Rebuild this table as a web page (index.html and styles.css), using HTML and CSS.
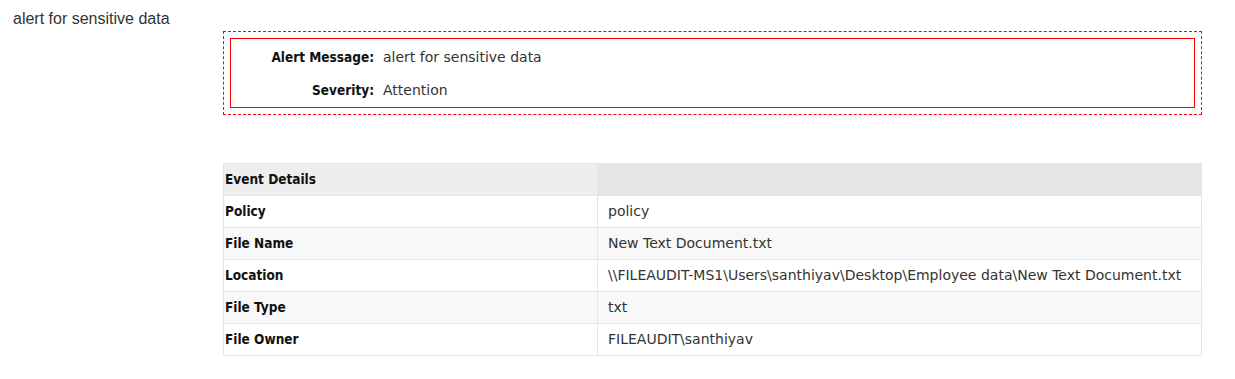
FILE: index.html
```html
<!DOCTYPE html>
<html lang="en">
<head>
    <meta charset="UTF-8">
    <title>Alert Details</title>
    <link rel="stylesheet" href="styles.css">
</head>
<body>
    <div class="page">
        <div class="page-title">alert for sensitive data</div>

        <div class="content">
            <div class="alert-wrap">
                <div class="alert-box">
                    <table class="alert-table">
                        <tr>
                            <td class="alert-label">Alert Message:</td>
                            <td class="alert-value">alert for sensitive data</td>
                        </tr>
                        <tr>
                            <td class="alert-label">Severity:</td>
                            <td class="alert-value">Attention</td>
                        </tr>
                    </table>
                </div>
            </div>

            <table class="details">
                <tr class="head">
                    <th>Event Details</th>
                    <th></th>
                </tr>
                <tr>
                    <td class="key">Policy</td>
                    <td>policy</td>
                </tr>
                <tr class="alt">
                    <td class="key">File Name</td>
                    <td>New Text Document.txt</td>
                </tr>
                <tr>
                    <td class="key">Location</td>
                    <td>\\FILEAUDIT-MS1\Users\santhiyav\Desktop\Employee data\New Text Document.txt</td>
                </tr>
                <tr class="alt">
                    <td class="key">File Type</td>
                    <td>txt</td>
                </tr>
                <tr>
                    <td class="key">File Owner</td>
                    <td>FILEAUDIT\santhiyav</td>
                </tr>
            </table>
        </div>
    </div>
</body>
</html>
```

FILE: styles.css
```css
body {
    margin: 0;
    background: #fff;
    font-family: "DejaVu Sans", sans-serif;
    color: #222;
}
.page {
    padding: 10px 13px;
}
.page-title {
    font-family: "Liberation Sans", Arial, sans-serif;
    font-size: 16px;
    line-height: 18px;
    color: #333;
}
.content {
    margin-left: 210px;
    width: 979px;
}
.alert-wrap {
    margin-top: 3px;
    border: 1px dashed #f00;
    padding: 6px;
}
.alert-box {
    border: 1px solid #f00;
    height: 68px;
}
.alert-table {
    border-collapse: collapse;
    margin-top: 1px;
}
.alert-table td {
    font-size: 14px;
    height: 33px;
    padding: 0;
}
.alert-label {
    width: 143px;
    text-align: right;
    font-family: "DejaVu Sans Condensed", "DejaVu Sans", sans-serif;
    font-size: 13.5px !important;
    font-weight: bold;
    color: #111;
    padding-right: 9px !important;
}
.alert-value {
    color: #333;
}
.details {
    width: 100%;
    margin-top: 48px;
    border-collapse: collapse;
    font-size: 14px;
}
.details th,
.details td {
    border: 1px solid #e5e5e5;
    height: 30px;
    text-align: left;
    vertical-align: middle;
    padding-bottom: 1px !important;
}
.details th {
    background: #eeeeee;
    font-family: "DejaVu Sans Condensed", "DejaVu Sans", sans-serif;
    font-size: 13.5px;
    font-weight: bold;
    color: #111;
    padding: 0 1px;
}
.details th + th {
    background: #e5e5e5;
}
.details td {
    color: #333;
    padding: 0 10px;
}
.details td.key {
    width: 371px;
    font-family: "DejaVu Sans Condensed", "DejaVu Sans", sans-serif;
    font-size: 13.5px;
    font-weight: bold;
    color: #111;
    padding: 0 1px;
}
.details tr.alt td {
    background: #f8f8f8;
}
```
